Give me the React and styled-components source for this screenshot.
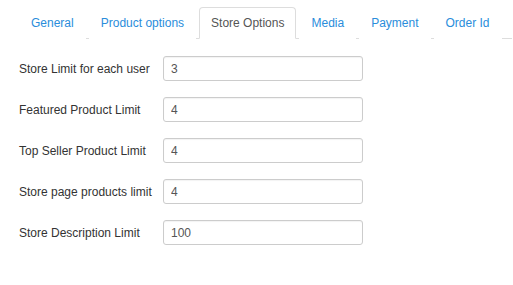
import React from "react";
import styled, { createGlobalStyle } from "styled-components";

const GlobalStyle = createGlobalStyle`
  body {
    margin: 0;
    background: #fff;
    font-family: "Liberation Sans", Arial, sans-serif;
    font-size: 12px;
    color: #333;
  }
`;

const Page = styled.div`
  padding: 7px 1px 0 19px;
`;

const Tabs = styled.ul`
  display: flex;
  list-style: none;
  margin: 0;
  padding: 0;
  border-bottom: 1px solid #ddd;
`;

const Tab = styled.li`
  margin-right: 3px;
  margin-bottom: -1px;
  padding: 8px 11px 7px;
  line-height: 15px;
  white-space: nowrap;
  border: 1px solid ${(p) => (p.$active ? "#ddd" : "transparent")};
  border-bottom-color: ${(p) => (p.$active ? "#fff" : "transparent")};
  border-radius: 4px 4px 0 0;
  background: #fff;
  color: ${(p) => (p.$active ? "#555" : "#2a8ddb")};
  cursor: pointer;
`;

const Form = styled.div`
  display: flex;
  flex-direction: column;
  gap: 16px;
  padding-top: 17px;
`;

const Row = styled.div`
  display: grid;
  grid-template-columns: 144px 200px;
  align-items: center;
`;

const Label = styled.label`
  color: #333;
  white-space: nowrap;
`;

const Input = styled.input`
  box-sizing: border-box;
  height: 25px;
  width: 200px;
  padding: 0 7px;
  border: 1px solid #ccc;
  border-radius: 3px;
  font-family: inherit;
  font-size: 12px;
  color: #555;
  box-shadow: inset 0 1px 1px rgba(0, 0, 0, 0.05);
`;

const tabs = ["General", "Product options", "Store Options", "Media", "Payment", "Order Id"];

const fields = [
  ["Store Limit for each user", "3"],
  ["Featured Product Limit", "4"],
  ["Top Seller Product Limit", "4"],
  ["Store page products limit", "4"],
  ["Store Description Limit", "100"],
];

export default function App() {
  return (
    <Page>
      <GlobalStyle />
      <Tabs>
        {tabs.map((t) => (
          <Tab key={t} $active={t === "Store Options"}>
            {t}
          </Tab>
        ))}
      </Tabs>
      <Form>
        {fields.map(([label, value]) => (
          <Row key={label}>
            <Label>{label}</Label>
            <Input defaultValue={value} />
          </Row>
        ))}
      </Form>
    </Page>
  );
}
